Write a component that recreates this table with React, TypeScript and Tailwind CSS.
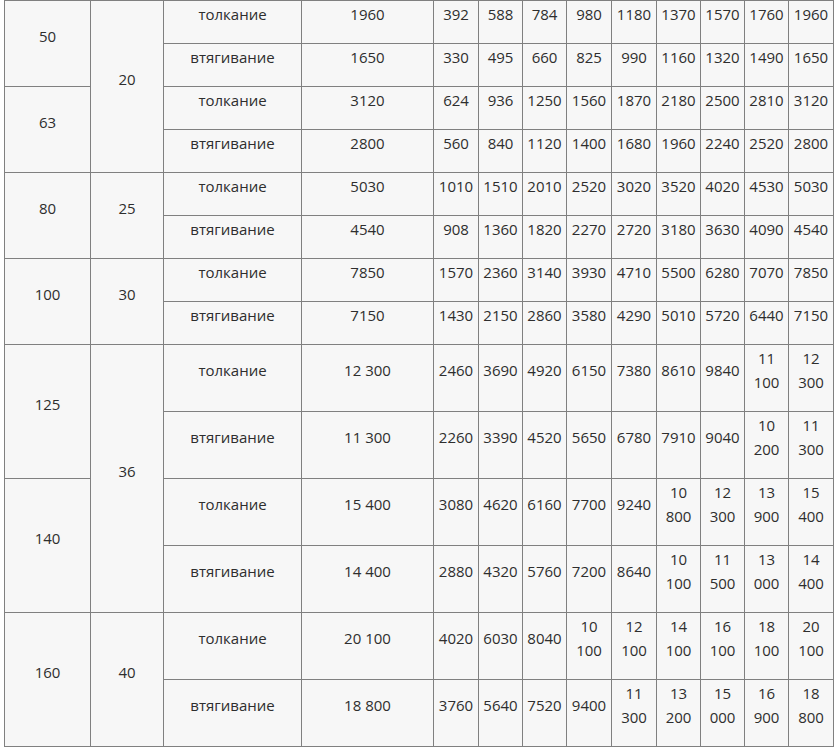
import { Fragment } from "react"

const widths = [86, 73, 138, 132, 45, 44, 44, 45, 45, 44, 44, 44, 45]

type Pair = {
  d: string
  rod?: { v: string; span: number }
  push: [string, string[]]
  pull: [string, string[]]
}

const data: Pair[] = [
  {
    d: "50",
    rod: { v: "20", span: 4 },
    push: ["1960", ["392", "588", "784", "980", "1180", "1370", "1570", "1760", "1960"]],
    pull: ["1650", ["330", "495", "660", "825", "990", "1160", "1320", "1490", "1650"]],
  },
  {
    d: "63",
    push: ["3120", ["624", "936", "1250", "1560", "1870", "2180", "2500", "2810", "3120"]],
    pull: ["2800", ["560", "840", "1120", "1400", "1680", "1960", "2240", "2520", "2800"]],
  },
  {
    d: "80",
    rod: { v: "25", span: 2 },
    push: ["5030", ["1010", "1510", "2010", "2520", "3020", "3520", "4020", "4530", "5030"]],
    pull: ["4540", ["908", "1360", "1820", "2270", "2720", "3180", "3630", "4090", "4540"]],
  },
  {
    d: "100",
    rod: { v: "30", span: 2 },
    push: ["7850", ["1570", "2360", "3140", "3930", "4710", "5500", "6280", "7070", "7850"]],
    pull: ["7150", ["1430", "2150", "2860", "3580", "4290", "5010", "5720", "6440", "7150"]],
  },
  {
    d: "125",
    rod: { v: "36", span: 4 },
    push: ["12 300", ["2460", "3690", "4920", "6150", "7380", "8610", "9840", "11 100", "12 300"]],
    pull: ["11 300", ["2260", "3390", "4520", "5650", "6780", "7910", "9040", "10 200", "11 300"]],
  },
  {
    d: "140",
    push: ["15 400", ["3080", "4620", "6160", "7700", "9240", "10 800", "12 300", "13 900", "15 400"]],
    pull: ["14 400", ["2880", "4320", "5760", "7200", "8640", "10 100", "11 500", "13 000", "14 400"]],
  },
  {
    d: "160",
    rod: { v: "40", span: 2 },
    push: ["20 100", ["4020", "6030", "8040", "10 100", "12 100", "14 100", "16 100", "18 100", "20 100"]],
    pull: ["18 800", ["3760", "5640", "7520", "9400", "11 300", "13 200", "15 000", "16 900", "18 800"]],
  },
]

const cell = "border border-[#808080] bg-[#f7f7f7] px-1 pt-px pb-[17px] text-center align-middle"

export default function App() {
  return (
    <div className="min-h-screen bg-white pl-[4px] font-['Open_Sans',sans-serif] text-[15px] leading-[24px] text-[#2e2e2e]">
      <table className="w-[830px] table-fixed border-collapse">
        <colgroup>
          {widths.map((w, i) => (
            <col key={i} style={{ width: w }} />
          ))}
        </colgroup>
        <tbody>
          {data.map((p) => (
            <Fragment key={p.d}>
              <tr>
                <td rowSpan={2} className={cell}>{p.d}</td>
                {p.rod && (
                  <td rowSpan={p.rod.span} className={cell}>{p.rod.v}</td>
                )}
                <td className={cell}>толкание</td>
                <td className={cell}>{p.push[0]}</td>
                {p.push[1].map((v, i) => (
                  <td key={i} className={cell}>{v}</td>
                ))}
              </tr>
              <tr>
                <td className={cell}>втягивание</td>
                <td className={cell}>{p.pull[0]}</td>
                {p.pull[1].map((v, i) => (
                  <td key={i} className={cell}>{v}</td>
                ))}
              </tr>
            </Fragment>
          ))}
        </tbody>
      </table>
    </div>
  )
}
